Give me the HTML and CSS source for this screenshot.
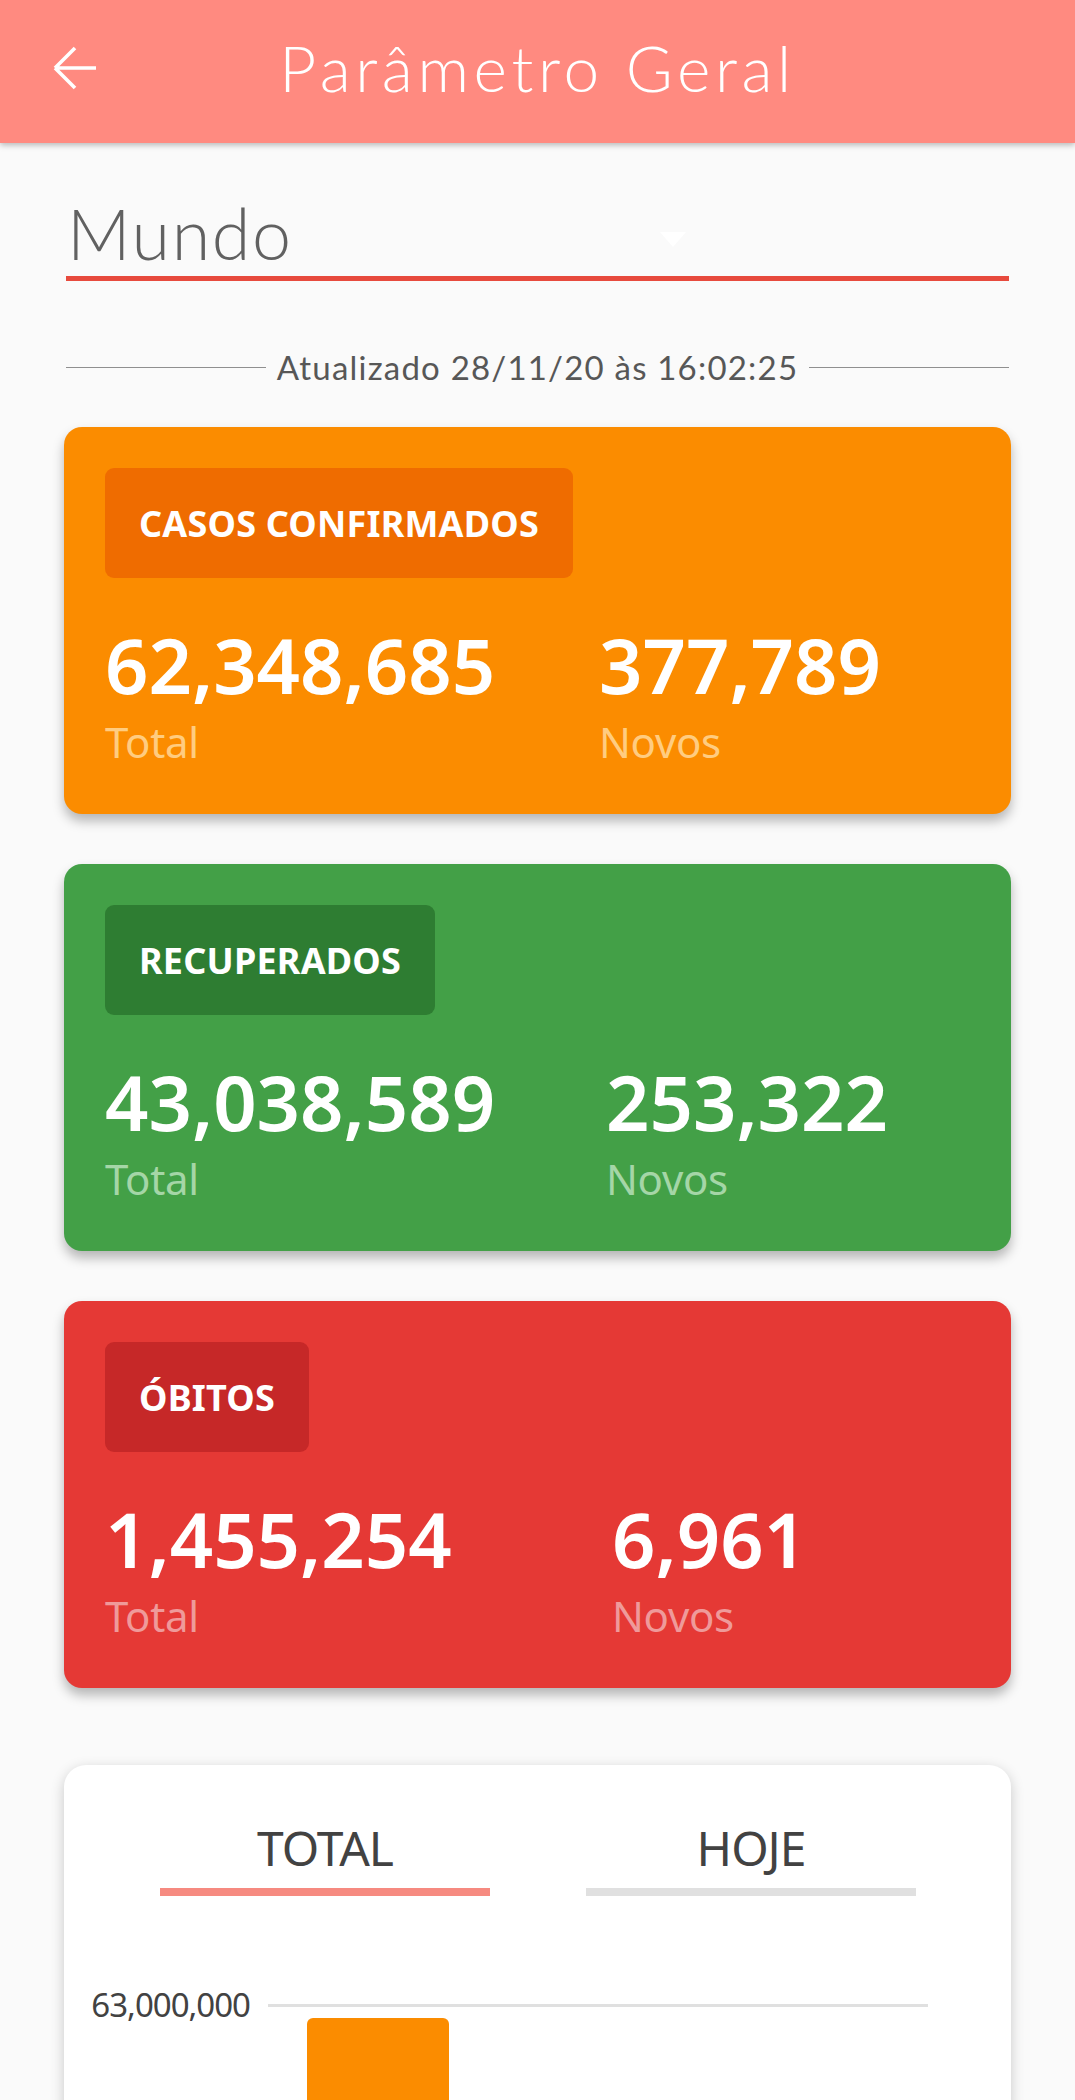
FILE: index.html
```html
<!DOCTYPE html>
<html lang="pt">
<head>
<meta charset="utf-8">
<title>Parâmetro Geral</title>
<link rel="stylesheet" href="styles.css">
</head>
<body>
<header class="appbar">
  <div class="appbar-left">
    <svg class="back-icon" width="46" height="46" viewBox="0 0 46 46" aria-hidden="true">
      <path d="M3 23 H44 M3 23 L23 3 M3 23 L23 43" fill="none" stroke="#ffffff" stroke-width="3.6" stroke-linecap="butt" stroke-linejoin="miter"/>
    </svg>
  </div>
  <h1 class="appbar-title">Parâmetro Geral</h1>
  <div class="appbar-right"></div>
</header>

<main class="content">
  <div class="dropdown">
    <span class="dropdown-value">Mundo</span>
    <span class="dropdown-arrow"></span>
  </div>

  <div class="updated">
    <span class="updated-line"></span>
    <span class="updated-text">Atualizado 28/11/20 às 16:02:25</span>
    <span class="updated-line"></span>
  </div>

  <section class="stat-card stat-card--orange">
    <div class="badge">CASOS CONFIRMADOS</div>
    <div class="stat-cols">
      <div class="stat-col">
        <div class="stat-value">62,348,685</div>
        <div class="stat-label">Total</div>
      </div>
      <div class="stat-col">
        <div class="stat-value">377,789</div>
        <div class="stat-label">Novos</div>
      </div>
    </div>
  </section>

  <section class="stat-card stat-card--green">
    <div class="badge">RECUPERADOS</div>
    <div class="stat-cols">
      <div class="stat-col">
        <div class="stat-value">43,038,589</div>
        <div class="stat-label">Total</div>
      </div>
      <div class="stat-col">
        <div class="stat-value">253,322</div>
        <div class="stat-label">Novos</div>
      </div>
    </div>
  </section>

  <section class="stat-card stat-card--red">
    <div class="badge">ÓBITOS</div>
    <div class="stat-cols">
      <div class="stat-col">
        <div class="stat-value">1,455,254</div>
        <div class="stat-label">Total</div>
      </div>
      <div class="stat-col">
        <div class="stat-value">6,961</div>
        <div class="stat-label">Novos</div>
      </div>
    </div>
  </section>

  <section class="chart-card">
    <div class="tabs">
      <div class="tab tab--active">
        <span class="tab-text">TOTAL</span>
        <span class="tab-bar"></span>
      </div>
      <div class="tab">
        <span class="tab-text">HOJE</span>
        <span class="tab-bar"></span>
      </div>
    </div>
    <div class="chart">
      <div class="y-axis">
        <span class="y-label">63,000,000</span>
      </div>
      <div class="plot">
        <div class="gridline"></div>
        <div class="bars">
          <div class="bar bar--orange"></div>
        </div>
      </div>
    </div>
  </section>
</main>
</body>
</html>
```

FILE: styles.css
```css
* {
  box-sizing: border-box;
}

html, body {
  margin: 0;
  padding: 0;
}

body {
  background: #fafafa;
  font-family: "Noto Sans", "Open Sans", "DejaVu Sans", sans-serif;
  color: #424242;
  min-height: 2100px;
  overflow: hidden;
}

/* App bar */
.appbar {
  height: 143px;
  background: #ff8a80;
  display: grid;
  grid-template-columns: 1fr auto 1fr;
  align-items: center;
  padding-bottom: 7px;
  box-shadow: 0 2px 6px rgba(0, 0, 0, 0.28);
  position: relative;
  z-index: 2;
}

.appbar-left {
  padding-left: 52px;
  display: flex;
  align-items: center;
}

.back-icon {
  display: block;
}

.appbar-title {
  margin: 0;
  font-family: "Lato", sans-serif;
  font-weight: 300;
  font-size: 64px;
  line-height: 64px;
  color: #ffffff;
  letter-spacing: 4.6px;
  white-space: nowrap;
}

/* Content */
.content {
  padding: 0 64px;
}

.dropdown {
  margin: 55px 2px 0 2px;
  display: flex;
  align-items: center;
  border-bottom: 5px solid #e74a3d;
  padding-bottom: 8px;
}

.dropdown-value {
  font-family: "Lato", sans-serif;
  font-weight: 300;
  font-size: 70px;
  line-height: 70px;
  letter-spacing: 1.6px;
  color: #616161;
  width: 594px;
  padding-left: 1px;
}

.dropdown-arrow {
  width: 0;
  height: 0;
  border-left: 13.5px solid transparent;
  border-right: 13.5px solid transparent;
  border-top: 15px solid #ffffff;
  margin-top: 12px;
}

.updated {
  margin: 70px 2px 0 2px;
  display: flex;
  align-items: center;
  gap: 11px;
}

.updated-line {
  flex: 1;
  height: 1.5px;
  background: #8f8f8f;
}

.updated-text {
  font-family: "Lato", sans-serif;
  font-weight: 400;
  font-size: 33px;
  line-height: 33px;
  letter-spacing: 1.2px;
  color: #575757;
  white-space: nowrap;
}

/* Stat cards */
.stat-card {
  margin-top: 43px;
  border-radius: 18px;
  padding: 41px 41px 51px 41px;
  box-shadow: 0 7px 12px rgba(0, 0, 0, 0.28);
  color: #ffffff;
}

.stat-card + .stat-card {
  margin-top: 50px;
}

.stat-card--orange { background: #fb8c00; }
.stat-card--green  { background: #43a047; }
.stat-card--red    { background: #e53935; }

.badge {
  display: inline-flex;
  align-items: center;
  height: 110px;
  padding: 0 34px;
  border-radius: 9px;
  font-weight: 700;
  font-size: 36px;
  letter-spacing: 0.2px;
  color: #ffffff;
}

.stat-card--orange .badge { background: #ef6c00; }
.stat-card--green .badge  { background: #2e7d32; }
.stat-card--red .badge    { background: #c62828; }

.stat-cols {
  margin-top: 48px;
  display: grid;
  grid-template-columns: 494px auto;
}

.stat-card--green .stat-cols { grid-template-columns: 501px auto; }
.stat-card--red .stat-cols   { grid-template-columns: 507px auto; }

.stat-value {
  font-weight: 600;
  font-size: 76px;
  line-height: 78px;
  letter-spacing: 0;
  white-space: nowrap;
}

.stat-label {
  margin-top: 17px;
  font-weight: 400;
  font-size: 42px;
  line-height: 42px;
  letter-spacing: -0.3px;
}

.stat-card--orange .stat-label { color: #ffcc80; }
.stat-card--green .stat-label  { color: #a5d6a7; }
.stat-card--red .stat-label    { color: #ef9a9a; }

/* Chart card */
.chart-card {
  margin-top: 77px;
  background: #ffffff;
  border-radius: 22px;
  box-shadow: 0 4px 14px rgba(0, 0, 0, 0.2);
  padding: 59px 0 0 27px;
  min-height: 600px;
}

.tabs {
  display: grid;
  grid-template-columns: 330px 330px;
  column-gap: 96px;
  padding-left: 69px;
}

.tab {
  display: flex;
  flex-direction: column;
  align-items: center;
}

.tab-text {
  font-size: 48px;
  line-height: 48px;
  color: #424242;
  letter-spacing: -1px;
}

.tab-bar {
  margin-top: 16px;
  width: 100%;
  height: 8px;
  background: #e0e0e0;
}

.tab--active .tab-bar {
  background: #f68a80;
}

.chart {
  margin-top: 92px;
  display: flex;
  align-items: flex-start;
  gap: 18px;
}

.y-axis {
  width: 159px;
  flex: none;
  display: flex;
  justify-content: flex-end;
}

.y-label {
  font-size: 33px;
  line-height: 33px;
  letter-spacing: -1px;
  color: #424242;
  white-space: nowrap;
}

.plot {
  width: 660px;
  flex: none;
  padding-top: 16px;
}

.gridline {
  height: 3px;
  background: #e0e0e0;
}

.bars {
  margin-top: 11px;
  padding-left: 39px;
  display: flex;
}

.bar {
  width: 142px;
  height: 240px;
  border-radius: 6px 6px 0 0;
}

.bar--orange {
  background: #fb8c00;
}
```
